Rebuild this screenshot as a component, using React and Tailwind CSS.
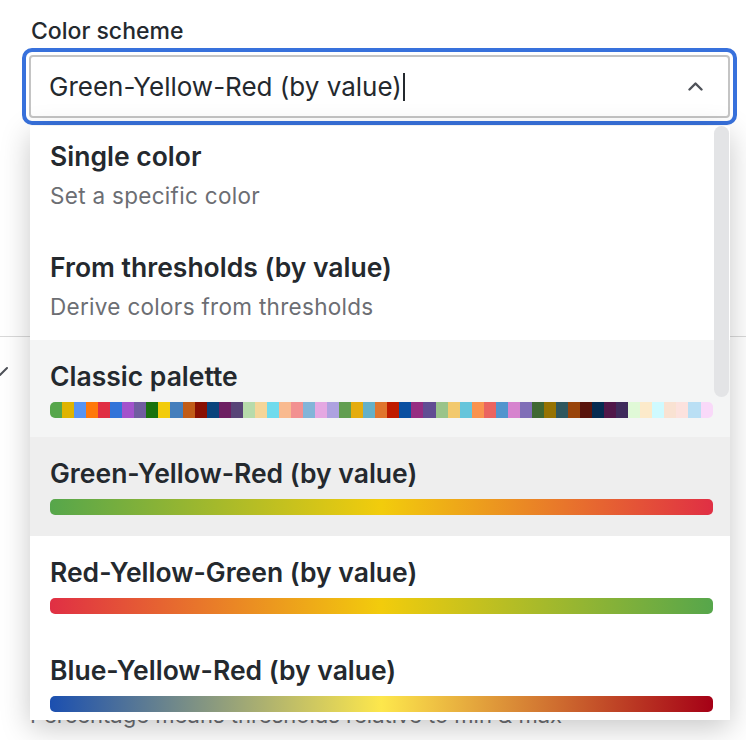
import React from "react";

const classic = ['#56A64B','#E0B400','#5794F2','#FF780A','#E02F44','#3274D9','#A352CC','#705DA0','#19730E','#F2CC0C','#447EBC','#C15C17','#890F02','#0A437C','#6D1F62','#584477','#B7DBAB','#F4D598','#70DBED','#F9BA8F','#F29191','#82B5D8','#E5A8E2','#AEA2E0','#629E51','#E5AC0E','#64B0C8','#E0752D','#BF1B00','#0A50A1','#962D82','#614D93','#9AC48A','#F2C96D','#65C5DB','#F9934E','#EA6460','#5195CE','#D683CE','#806EB7','#3F6833','#967302','#2F575E','#99440A','#58140C','#052B51','#511749','#3F2B5B','#E0F9D7','#FCEACA','#CFFAFF','#F9E2D2','#FCE2DE','#BADFF4','#F9D9F9'];

function Title({ children }) {
  return <div className="text-[26.5px] leading-[31px] font-semibold text-[#24292e] whitespace-nowrap">{children}</div>;
}
function Desc({ children }) {
  return <div className="mt-[10px] text-[22.5px] leading-[27px] tracking-[0.3px] text-[#6c6e73] whitespace-nowrap">{children}</div>;
}

export default function App() {
  return (
    <div className="relative w-[746px] h-[740px] overflow-hidden bg-white font-['Inter',sans-serif]">
      {/* form behind the menu */}
      <div className="flex flex-col">
        <div className="pl-[31px] pt-[17px] text-[23px] leading-[28px] font-medium text-[#24292e]">Color scheme</div>
        <div className="mt-[3px] ml-[22px] w-[715px] h-[77px] rounded-[10px] border-[4px] border-[#3871dc] p-[3px]">
          <div className="h-full rounded-[4px] border-2 border-[#c4c4c4] flex items-center pl-[18px] pr-[25px]">
            <span className="text-[26px] leading-[31px] text-[#24292e] whitespace-nowrap">Green-Yellow-Red (by value)</span>
            <span className="ml-[1px] w-[2px] h-[28px] bg-[#24292e]" />
            <svg className="ml-auto" width="15" height="9" viewBox="0 0 15 9">
              <polyline points="1.5,7.5 7.5,1.5 13.5,7.5" fill="none" stroke="#4f5259" strokeWidth="2.4" strokeLinecap="round" strokeLinejoin="round" />
            </svg>
          </div>
        </div>
        <div className="mt-[211px] h-[1px] bg-[#d9d9d9]" />
        <svg className="mt-[28px] -ml-[10px]" width="20" height="12" viewBox="0 0 20 12">
          <polyline points="3,3 10,10 17,3" fill="none" stroke="#4f5259" strokeWidth="2" strokeLinecap="round" strokeLinejoin="round" />
        </svg>
        <div className="mt-[324px] pl-[30px] text-[22px] leading-[28px] text-[#6c6e73] whitespace-nowrap">Percentage means thresholds relative to min &amp; max</div>
      </div>

      {/* dropdown menu */}
      <div className="absolute left-[30px] top-[126px] w-[700px] h-[594px] bg-white overflow-hidden shadow-[0_8px_28px_rgba(0,0,0,0.22)]">
        <div className="flex flex-col">
          <div className="h-[104px] pt-[15px] pl-[20px] pr-[17px]">
            <Title>Single color</Title>
            <Desc>Set a specific color</Desc>
          </div>
          <div className="h-[110px] pt-[22px] pl-[20px] pr-[17px]">
            <Title>From thresholds (by value)</Title>
            <Desc>Derive colors from thresholds</Desc>
          </div>
          <div className="h-[97px] pt-[21px] pl-[20px] pr-[17px] bg-[#f4f5f5]">
            <Title>Classic palette</Title>
            <div className="mt-[10px] h-[16px] rounded-[5px] overflow-hidden flex">
              {classic.map((c, i) => (
                <div key={i} className="flex-1" style={{ backgroundColor: c }} />
              ))}
            </div>
          </div>
          <div className="h-[99px] pt-[21px] pl-[20px] pr-[17px] bg-[#eeeeee]">
            <Title>Green-Yellow-Red (by value)</Title>
            <div className="mt-[10px] h-[16px] rounded-[5px] bg-[linear-gradient(90deg,#56a64b,#f2cc0c_50%,#e02f44)]" />
          </div>
          <div className="h-[98px] pt-[21px] pl-[20px] pr-[17px]">
            <Title>Red-Yellow-Green (by value)</Title>
            <div className="mt-[10px] h-[16px] rounded-[5px] bg-[linear-gradient(90deg,#e02f44,#f2cc0c_50%,#56a64b)]" />
          </div>
          <div className="h-[98px] pt-[21px] pl-[20px] pr-[17px]">
            <Title>Blue-Yellow-Red (by value)</Title>
            <div className="mt-[10px] h-[16px] rounded-[5px] bg-[linear-gradient(90deg,#1b4fb0,#fde74c_50%,#a50016)]" />
          </div>
        </div>
        <div className="absolute right-[1px] top-0 w-[15px] h-[271px] rounded-full bg-[#e3e4e6]" />
      </div>
    </div>
  );
}
